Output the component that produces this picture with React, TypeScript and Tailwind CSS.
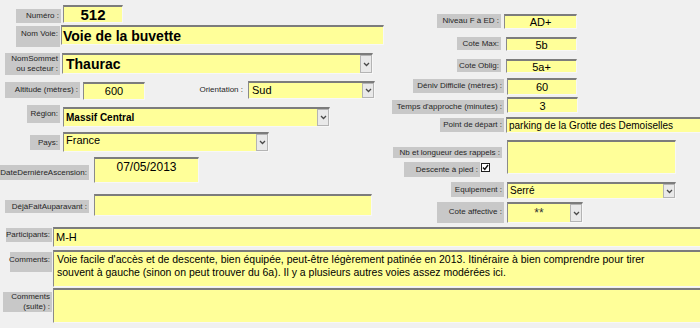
import React from 'react';

type BoxProps = { className?: string; children?: React.ReactNode };

function Lbl({ className = '', children }: BoxProps) {
  return (
    <div className={'flex shrink-0 justify-end bg-[#c8c8c8] pr-[2px] text-right text-[8px] leading-[10px] text-[#262626] whitespace-nowrap ' + className}>
      {children}
    </div>
  );
}

function Chevron() {
  return (
    <svg width="7" height="5" viewBox="0 0 7 5" fill="none" stroke="#4a4a4a" strokeWidth="1.3">
      <polyline points="1 1 3.5 3.5 6 1" />
    </svg>
  );
}

function Fld({ className = '', children, combo = false, inner = '' }: BoxProps & { combo?: boolean; inner?: string }) {
  return (
    <div className={'flex shrink-0 border-t-2 border-l border-b border-r border-t-[#7c7c7c] border-l-[#8a8a8a] border-b-[#f7f7f7] border-r-[#f7f7f7] bg-[#ffff99] text-black whitespace-nowrap ' + className}>
      <div className={'flex min-w-0 flex-1 overflow-hidden ' + inner}>{children}</div>
      {combo && (
        <div className="flex w-[12px] shrink-0 items-center justify-center border border-[#b4b4b4] bg-[#e9e9e9]">
          <Chevron />
        </div>
      )}
    </div>
  );
}

function CheckBox() {
  return (
    <svg width="9" height="9" viewBox="0 0 9 9">
      <rect x="0.5" y="0.5" width="8" height="8" fill="#ffffff" stroke="#1e1e1e" />
      <polyline points="2 4.5 3.8 6.5 7 2" fill="none" stroke="#111" strokeWidth="1.4" />
    </svg>
  );
}

export default function App() {
  return (
    <div className="h-[328px] w-[700px] overflow-hidden bg-[#f0f0f0] font-['Liberation_Sans',Arial,sans-serif]">
      <div className="flex h-[227px]">
        {/* left column */}
        <div className="flex w-[390px] shrink-0 flex-col">
          <div className="mt-[5px] flex items-start">
            <Lbl className="ml-[16px] mt-[4px] h-[14px] w-[45px] items-center">Numéro :</Lbl>
            <Fld className="ml-[2px] h-[18px] w-[60px]" inner="items-center justify-center text-[15px] leading-[15px] font-bold">512</Fld>
          </div>
          <div className="mt-[2px] flex items-start">
            <Lbl className="ml-[16px] mt-[1px] h-[21px] w-[44px] pt-[3px]">Nom Voie:</Lbl>
            <Fld className="ml-[1px] h-[20px] w-[323px]" inner="items-center pl-[1px] text-[14px] leading-[16px] font-bold">Voie de la buvette</Fld>
          </div>
          <div className="mt-[6px] flex items-start">
            <Lbl className="ml-[5px] h-[22px] w-[55px] items-center">
              <span>NomSommet<br />ou secteur :</span>
            </Lbl>
            <Fld combo className="ml-[2px] h-[21px] w-[311px]" inner="items-center pl-[3px] text-[14px] leading-[16px] font-bold">Thaurac</Fld>
          </div>
          <div className="mt-[6px] flex items-start">
            <Lbl className="ml-[5px] mt-[1px] h-[16px] w-[75px] items-center">Altitude (mètres) :</Lbl>
            <Fld className="ml-[3px] mt-[1px] h-[18px] w-[62px]" inner="items-center justify-center text-[11px] leading-[13px]">600</Fld>
            <span className="mt-[4px] w-[98px] shrink-0 text-right text-[8px] leading-[10px] text-[#262626]">Orientation :</span>
            <Fld combo className="ml-[5px] h-[18px] w-[127px]" inner="items-center pl-[3px] text-[11px] leading-[13px]">Sud</Fld>
          </div>
          <div className="mt-[5px] flex items-start">
            <Lbl className="ml-[27px] h-[18px] w-[33px] pt-[4px]">Région:</Lbl>
            <Fld combo className="ml-[3px] mt-[2px] h-[20px] w-[267px]" inner="items-center pl-[2px] text-[10px] leading-[12px] font-bold">Massif Central</Fld>
          </div>
          <div className="mt-[5px] flex items-start">
            <Lbl className="ml-[30px] mt-[3px] h-[15px] w-[30px] items-center">Pays:</Lbl>
            <Fld combo className="ml-[3px] h-[20px] w-[206px]" inner="items-start pl-[2px] text-[11px] leading-[13px]">France</Fld>
          </div>
          <div className="mt-[5px] flex items-start">
            <Lbl className="mt-[8px] h-[15px] w-[89px] items-center">DateDernièreAscension:</Lbl>
            <Fld className="ml-[5px] h-[26px] w-[105px]" inner="items-start justify-center pt-[1px] text-[12px] leading-[14px]">07/05/2013</Fld>
          </div>
          <div className="mt-[11px] flex items-start">
            <Lbl className="ml-[5px] mt-[6px] h-[13px] w-[84px] items-center">DéjàFaitAuparavant :</Lbl>
            <Fld className="ml-[5px] h-[22px] w-[278px]" />
          </div>
        </div>

        {/* right column */}
        <div className="flex flex-1 flex-col">
          <div className="mt-[14px] flex items-start">
            <Lbl className="ml-[47px] h-[14px] w-[64px] items-center">Niveau F à ED :</Lbl>
            <Fld className="ml-[3px] h-[15px] w-[73px]" inner="items-center justify-center text-[11px] leading-[12px]">AD+</Fld>
          </div>
          <div className="mt-[8px] flex items-start">
            <Lbl className="ml-[67px] h-[13px] w-[44px] items-center">Cote Max:</Lbl>
            <Fld className="ml-[5px] h-[14px] w-[71px]" inner="items-center justify-center text-[11px] leading-[12px]">5b</Fld>
          </div>
          <div className="mt-[8px] flex items-start">
            <Lbl className="ml-[67px] h-[13px] w-[44px] items-center">Cote Oblig:</Lbl>
            <Fld className="ml-[5px] h-[14px] w-[71px]" inner="items-center justify-center text-[11px] leading-[12px]">5a+</Fld>
          </div>
          <div className="mt-[5px] flex items-start">
            <Lbl className="ml-[23px] mt-[1px] h-[14px] w-[91px] items-center">Déniv Difficile (mètres) :</Lbl>
            <Fld className="ml-[3px] h-[17px] w-[70px]" inner="items-center justify-center text-[11px] leading-[12px]">60</Fld>
          </div>
          <div className="mt-[2px] flex items-start">
            <Lbl className="ml-[2px] mt-[3px] h-[14px] w-[112px] items-center">Temps d'approche (minutes) :</Lbl>
            <Fld className="ml-[3px] h-[16px] w-[71px]" inner="items-center justify-center text-[11px] leading-[12px]">3</Fld>
          </div>
          <div className="mt-[3px] flex items-start">
            <Lbl className="ml-[50px] mt-[1px] h-[14px] w-[64px] items-center">Point de départ :</Lbl>
            <Fld className="ml-[2px] h-[16px] w-[194px] border-r-0" inner="items-center pl-[2px] text-[10px] leading-[12px]">parking de la Grotte des Demoiselles</Fld>
          </div>
          <div className="mt-[7px] flex items-start">
            <div className="flex w-[114px] shrink-0 flex-col">
              <Lbl className="ml-[3px] mt-[7px] h-[11px] w-[109px] items-center">Nb et longueur des rappels :</Lbl>
              <div className="mt-[4px] flex items-start">
                <Lbl className="ml-[14px] h-[15px] w-[76px] items-center">Descente à pied :</Lbl>
                <div className="ml-[1px] mt-[1px]">
                  <CheckBox />
                </div>
              </div>
            </div>
            <Fld className="ml-[3px] h-[34px] w-[169px]" />
          </div>
          <div className="mt-[5px] flex items-start">
            <Lbl className="ml-[61px] h-[15px] w-[53px] items-center">Equipement :</Lbl>
            <Fld combo className="ml-[3px] h-[17px] w-[169px]" inner="items-center pl-[2px] text-[10px] leading-[12px]">Serré</Fld>
          </div>
          <div className="mt-[3px] flex items-start">
            <Lbl className="ml-[47px] h-[21px] w-[67px] pt-[5px]">Cote affective :</Lbl>
            <Fld combo className="ml-[3px] h-[21px] w-[76px]" inner="items-center justify-center text-[12px] leading-[14px] text-[#333]">**</Fld>
          </div>
        </div>
      </div>

      {/* bottom rows */}
      <div className="flex flex-col">
        <div className="flex items-start">
          <Lbl className="ml-[6px] mt-[1px] h-[14px] w-[46px] items-center">Participants:</Lbl>
          <Fld className="ml-[1px] h-[20px] flex-1 border-r-0" inner="items-center pl-[2px] text-[11px] leading-[13px]">M-H</Fld>
        </div>
        <div className="mt-[3px] flex items-start">
          <Lbl className="ml-[10px] mt-[2px] h-[20px] w-[42px] pt-[3px]">Comments:</Lbl>
          <Fld className="ml-[1px] h-[37px] flex-1 border-r-0" inner="flex-col items-start pl-[3px] pt-[1px] text-[10.5px] leading-[13px]">
            <span>Voie facile d'accès et de descente, bien équipée, peut-être légèrement patinée en 2013. Itinéraire à bien comprendre pour tirer</span>
            <span>souvent à gauche (sinon on peut trouver du 6a). Il y a plusieurs autres voies assez modérées ici.</span>
          </Fld>
        </div>
        <div className="mt-[1px] flex items-start">
          <Lbl className="ml-[3px] mt-[4px] h-[20px] w-[49px] items-center">
            <span>Comments<br />(suite) :</span>
          </Lbl>
          <Fld className="ml-[1px] h-[35px] flex-1 border-r-0" />
        </div>
      </div>
    </div>
  );
}
